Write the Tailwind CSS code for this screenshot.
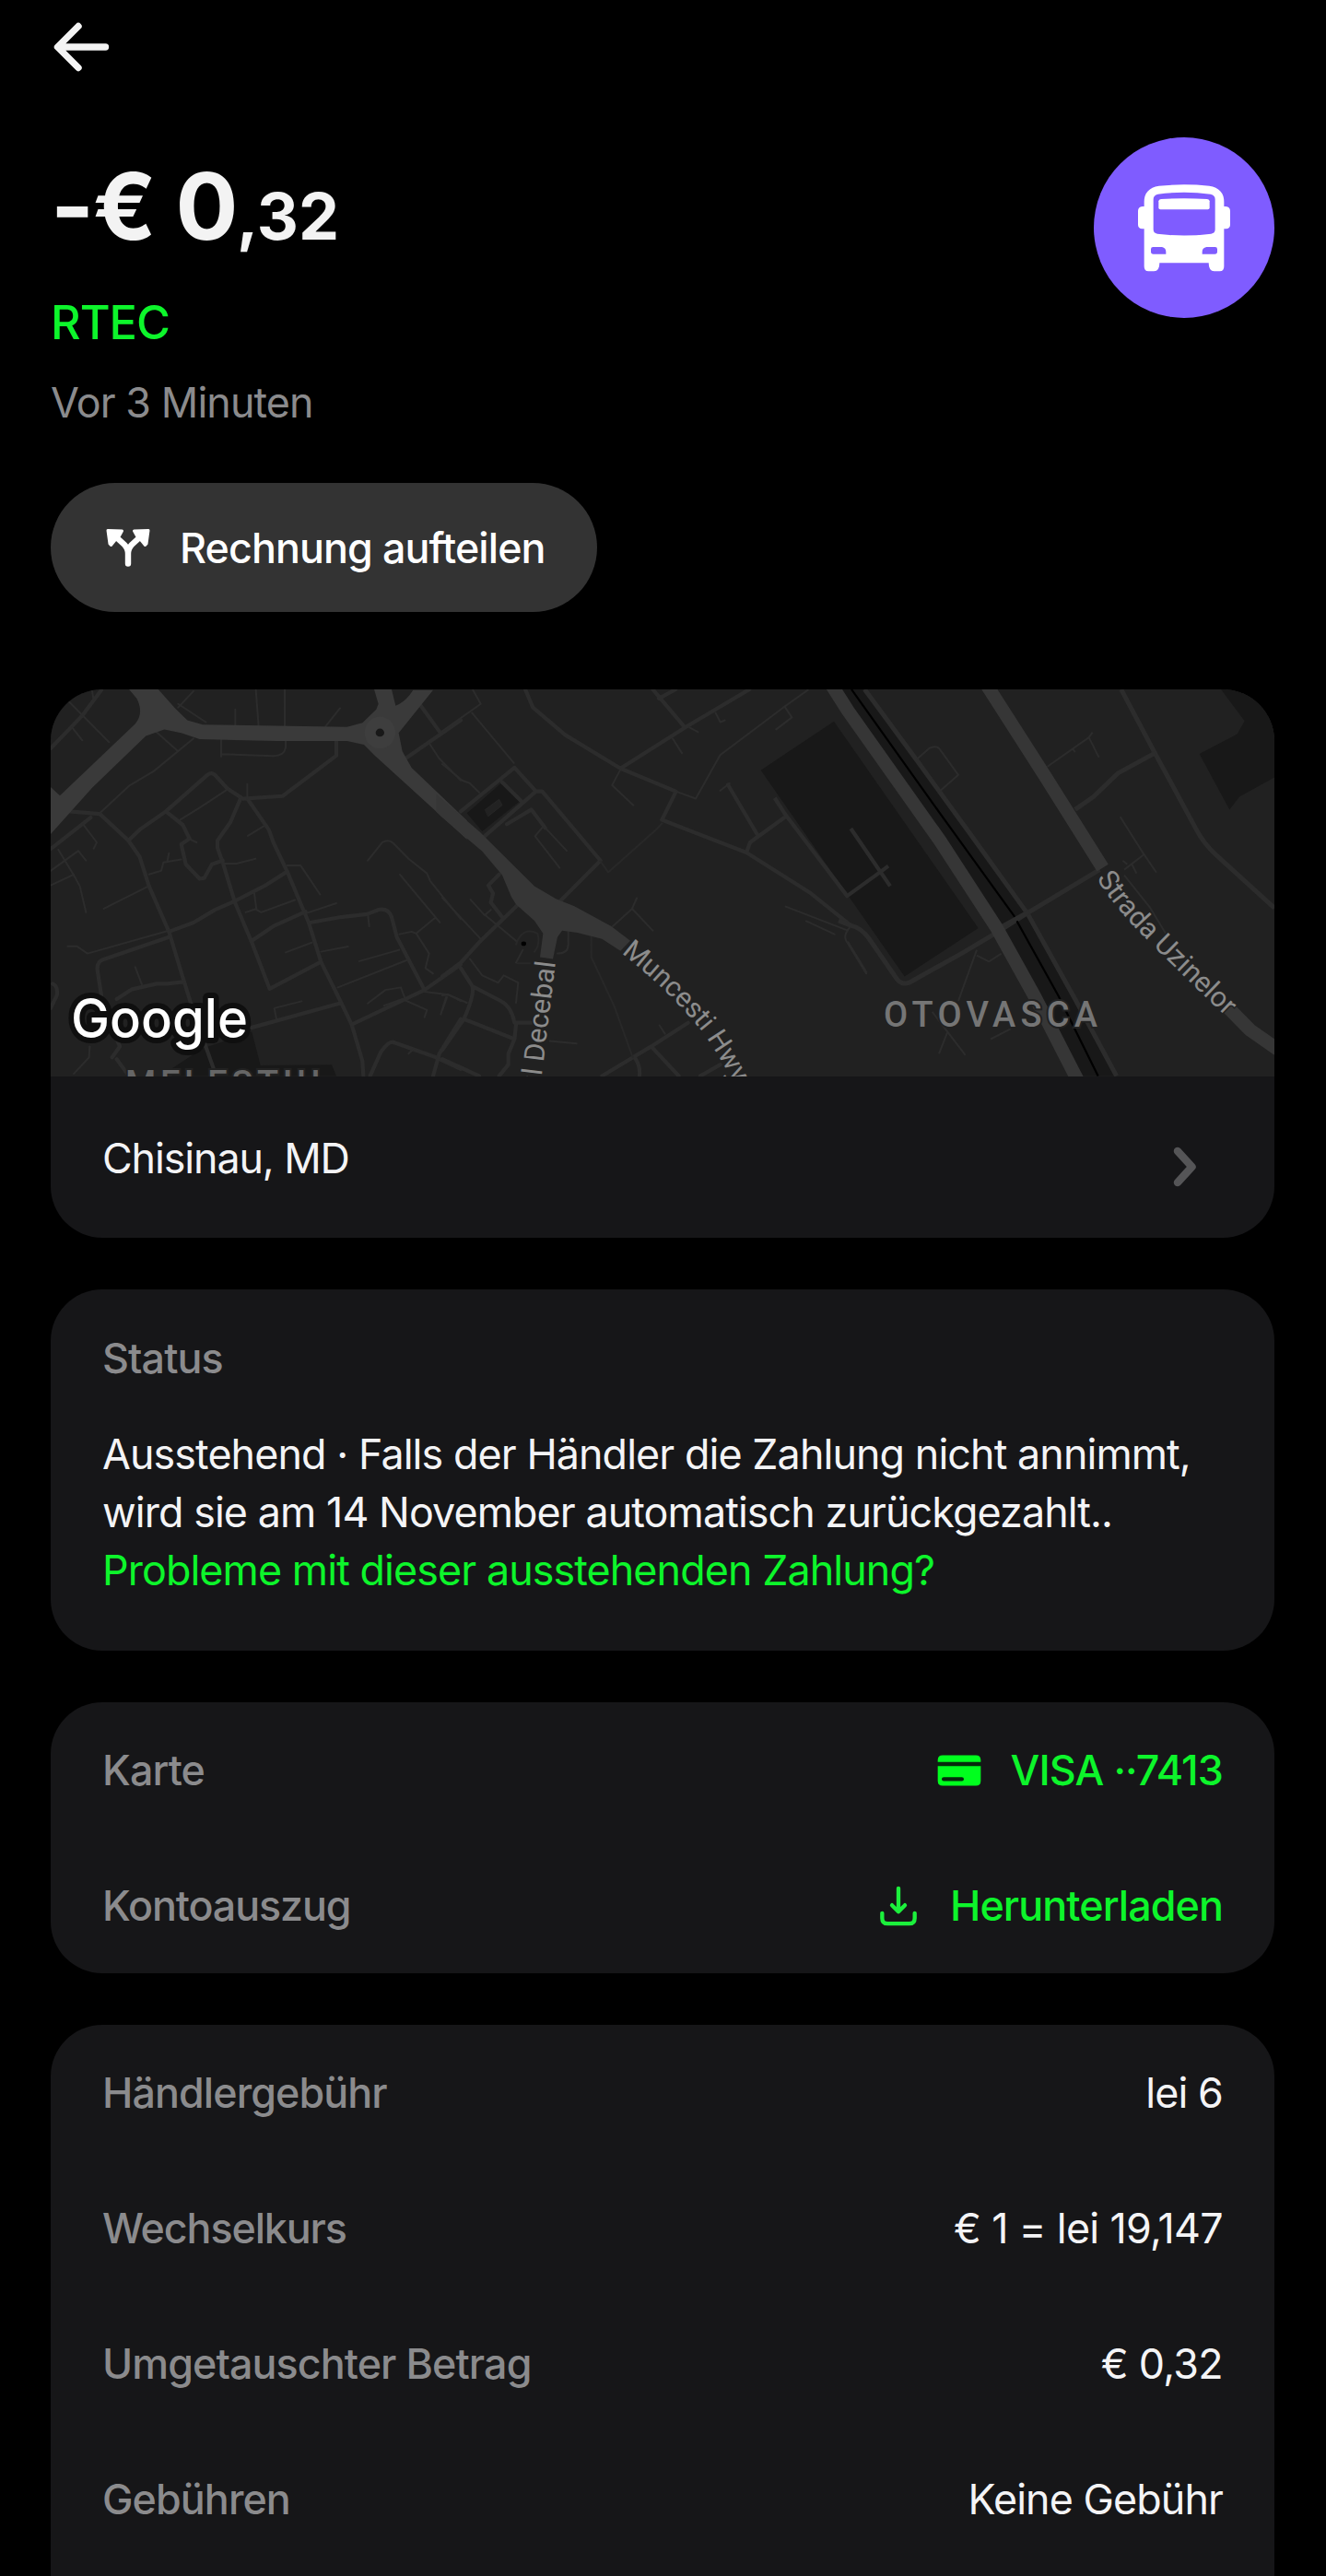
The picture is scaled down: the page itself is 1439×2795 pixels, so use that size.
<!DOCTYPE html>
<html lang="de">
<head>
    <meta charset="utf-8" />
    <title>RTEC</title>
    <meta name="viewport" content="width=device-width, initial-scale=1.0">
    <script src="https://cdn.jsdelivr.net/npm/@tailwindcss/browser@4"></script>
</head>
<body class="bg-black font-[Inter,sans-serif] text-[44.8px] leading-[63px] tracking-[-0.02em] text-[#f4f4f6]">
<div class="w-[1439px] h-[2795px] overflow-hidden px-[55px]">

    <!-- Back -->
    <header class="h-[149px] pt-[23px]">
        <a href="#" aria-label="Zurück" class="block w-16">
            <svg class="w-16 h-14" viewBox="0 0 64 56" fill="none" stroke="#f4f4f4" stroke-width="7.4" stroke-linecap="round" stroke-linejoin="round">
                <path d="M30 5.5L7.5 28L30 50.5M8 28H59.500" />
            </svg>
        </a>
    </header>

    <!-- Amount -->
    <section class="flex justify-between items-start w-[1328px] h-[319px]">
        <div class="pt-[18px]">
            <h1 class="text-[100.8px] leading-[112px] tracking-[-1.5px] font-bold whitespace-nowrap text-[#f3f3f3]">-€ 0<span class="text-[70px] leading-none tracking-normal">,32</span></h1>
            <p class="mt-[36px] text-[50.4px] leading-[70px] tracking-[-1px] font-medium text-[#0df52b]">RTEC</p>
            <p class="mt-[21px] tracking-[-0.9px] text-[#8b8b8d]">Vor 3 Minuten</p>
        </div>
        <div class="w-[196px] h-[196px] rounded-full bg-[#7f5cff]">
            <svg class="w-full h-full" viewBox="0 0 588 588">
                <path fill="#fff" d="M164 210Q164 166 212 158Q294 150 376 158Q424 166 424 210V225H430Q444 227 444 240V284Q444 297 430 298H424V420Q424 436 410 436H392Q374 436 374 409H214Q214 436 196 436H178Q164 436 164 420V298H158Q144 297 144 284V240Q144 227 158 225H164Z" />
                <path fill="#7f5cff" d="M194 202Q194 188 209 185Q294 174 380 185Q395 188 395 202V300Q395 312 382 314Q294 325 207 314Q194 312 194 300ZM193 357H222Q235 360 235 373V380H194Q186 380 186 372V364Q186 357 193 357ZM395 357H367Q353 360 353 373V380H394Q402 380 402 372V364Q402 357 395 357Z" />
                <path fill="#fff" d="M211 208Q211 202 219 201Q294 196 369 201Q377 202 377 208V229Q377 235 371 235H217Q211 235 211 229Z" />
            </svg>
        </div>
    </section>

    <!-- Split bill -->
    <button class="mt-14 flex items-center gap-7 w-[593px] h-[140px] pl-14 rounded-full bg-[#333] text-white font-medium tracking-[-0.9px] whitespace-nowrap">
        <svg class="w-14 h-14" viewBox="0 0 56 56">
            <path fill="none" stroke="#fff" stroke-width="6.400" stroke-linecap="round" d="M28 45.500V35Q28 29 24 25L12 14M28 35Q28 29 32 25L44 14" />
            <path fill="#fff" stroke="#fff" stroke-width="3" stroke-linejoin="round" d="M6 9.500L21.500 10L18.500 15.500L14 20L9.500 25.500L8 24ZM50 9.500L34.500 10L37.500 15.500L42 20L46.500 25.500L48 24Z" />
        </svg>
        <span class="pt-[3px]">Rechnung aufteilen</span>
    </button>

    <!-- Location -->
    <section class="mt-[84px] w-[1328px] rounded-[56px] overflow-hidden bg-[#161618]">
        <svg class="block w-[1328px] h-[420px] bg-[#212121] tracking-normal" viewBox="0 0 1328 420" font-family="Roboto, sans-serif">
            <defs>
                <path id="muncesti" d="M619 286Q671 327 706 370Q726 397 746 436" />
                <path id="uzinelor" d="M1135 205Q1153 235 1187 269Q1233 315 1286 365" />
            </defs>

            <!-- West -->
            <g transform="translate(-15 -8) scale(.33333 .39542)" fill="none" stroke="#2c2c2c" stroke-linejoin="round" stroke-linecap="round">
                <path fill="#181818" stroke="none" d="M440 1060L540 1005L700 960L728 1052L960 1050L975 1081H440Z" />
                <g stroke-width="4.200">
                    <path vector-effect="non-scaling-stroke" d="M45 182L148 92L210 22M45 458L175 372M105 355L205 362L298 435L335 480L365 560L430 685L475 810L510 905L575 1060" />
                    <path vector-effect="non-scaling-stroke" d="M298 435L335 405L420 355L555 255Q570 245 583 258L620 292L670 320L800 313L975 202V158M685 320L755 405L770 440L815 520L885 660L925 768L985 870L1025 940L1060 1040L1063 1081" />
                    <path vector-effect="non-scaling-stroke" d="M662 322L630 385L588 435V455L605 495L645 605L700 715L758 842L925 768M430 685L510 660L580 625L640 603L740 560L815 520M700 710L770 670L875 630" />
                    <path vector-effect="non-scaling-stroke" d="M890 660L990 645L1075 637L1115 624Q1145 620 1155 645L1172 700L1262 845L1380 775M1025 940L1262 845M700 948L985 882" />
                    <path vector-effect="non-scaling-stroke" d="M420 355L475 392L497 430L470 445L485 500L530 540L545 538L570 500L605 490M210 860L197 790Q195 768 215 762L430 700M260 870L310 843L390 828H425L475 823" />
                    <path vector-effect="non-scaling-stroke" d="M1200 210L1380 105M1250 65L1310 135M45 895L65 860Q70 835 52 828M260 1035L300 1081M245 1030L270 1000L250 960" />
                    <path vector-effect="non-scaling-stroke" d="M1085 1081L1120 1015Q1145 985 1160 988L1300 1030L1380 1062M1290 1081L1310 1020L1380 925" />
                </g>
                <g stroke-width="2">
                    <path vector-effect="non-scaling-stroke" d="M100 50L235 165M115 125L148 160M180 25L185 50M205 360L300 285L380 245L510 155M380 130L460 190M460 70L510 25M460 60L550 110" />
                    <path vector-effect="non-scaling-stroke" d="M646 75V122M713 22L722 122M807 20V130M987 72L940 122M600 150V205M600 198L770 203Q805 203 810 180V158M685 280V320M740 395L687 422" />
                    <path vector-effect="non-scaling-stroke" d="M467 378L530 345L620 295M365 528L405 518L412 495L470 487M430 470L425 490M495 430L520 440M605 498H650L712 485M815 503H858L880 530L922 583" />
                    <path vector-effect="non-scaling-stroke" d="M150 390L195 440L185 457M45 518L135 463L160 490M70 460L120 530L140 560L160 632M45 558L120 528M218 622L360 562" />
                    <path vector-effect="non-scaling-stroke" d="M708 580L715 625L730 632L840 598M680 632L715 622M875 635L975 607M810 742L895 715M925 740L1013 726M1078 640L1082 670M1050 766L1180 735M980 838L1205 763" />
                    <path vector-effect="non-scaling-stroke" d="M1077 490L1125 440Q1145 430 1160 442L1210 485L1270 525L1280 545L1380 650M1182 528L1312 660M1180 692L1220 685L1235 690L1277 745L1265 785L1290 800M1235 690L1295 648" />
                    <path vector-effect="non-scaling-stroke" d="M1077 882L1135 845L1185 838L1197 865M1130 888L1190 870L1270 900L1262 920M1262 850L1340 858L1380 875M1332 865L1315 912M862 876L773 895L780 925M1210 1020L1225 1008L1300 1030" />
                    <path vector-effect="non-scaling-stroke" d="M100 725H130L165 745L430 682M320 782L342 830M172 1000L170 1030L120 1075M1275 165L1310 210L1380 270" />
                </g>
                <path fill="#3a3a3a" stroke="none" d="M300 20H395L450 72L490 105L540 117L1010 123L1060 112L1105 75L1112 60L1098 20H1155L1168 65Q1200 55 1225 22H1290L1178 140L1190 190L1220 235L1400 380V432L1100 202L1065 172L1010 162H780L530 157L470 140L415 130L355 148L180 290L45 417V288L75 312L320 115Q350 85 325 45Z" />
                <ellipse cx="1117" cy="139" rx="50" ry="44" fill="#3e3e3e" stroke="none" />
                <ellipse cx="1117" cy="139" rx="14" ry="11" fill="#181818" stroke="none" />
            </g>

            <!-- Center -->
            <g transform="translate(425 -8) scale(.33333 .39542)" fill="none" stroke="#2c2c2c" stroke-linejoin="round" stroke-linecap="round">
                <path fill="#181818" stroke="none" d="M80 360L195 275L255 325L130 410Z" />
                <g stroke-width="4.200">
                    <path vector-effect="non-scaling-stroke" d="M270 20L295 70L400 145L580 237L760 300M685 20L790 125M705 45L760 20M580 237L790 125L1000 20" />
                    <path vector-effect="non-scaling-stroke" d="M760 302L715 378L990 468L1200 580L1330 668M990 468L1002 440L1120 368M1025 418L930 282" />
                    <path vector-effect="non-scaling-stroke" d="M60 355L235 235L305 300L135 425M195 275L255 325M305 300H325L515 490L385 600M210 390L290 350L335 400" />
                    <path vector-effect="non-scaling-stroke" d="M0 808L60 770L125 710L245 612M195 645L158 605L165 580L150 558L185 528M520 1081L680 1000L800 935M680 1000L770 1081M630 1035Q645 1055 642 1081M840 1081L905 1050" />
                    <path vector-effect="non-scaling-stroke" d="M60 785L98 835L190 875Q225 890 235 935H290M98 835Q105 860 70 925L0 1010M70 925L230 978M240 940L235 980L215 1020V1050L185 1081M0 1035L120 1081" />
                </g>
                <g stroke-width="2">
                    <path vector-effect="non-scaling-stroke" d="M760 300L825 320L845 290L905 200L1110 70L1190 22M1115 68L1138 97L1087 130M580 240L553 283L622 338M750 155L780 195M890 85L905 110L920 105M805 125L832 137M905 298L935 278" />
                    <path vector-effect="non-scaling-stroke" d="M0 135L125 60L100 22M97 85L233 222M0 225L65 270L90 278L120 303M335 400L405 463M325 400L302 423L382 510" />
                    <path vector-effect="non-scaling-stroke" stroke="#282828" d="M715 388L700 402L540 522L515 492M485 690V755L560 890L620 1030M240 720Q260 670 310 690Q320 720 300 740M245 772H285" />
                    <path vector-effect="non-scaling-stroke" d="M555 670L618 622L685 682M618 622L633 593M92 597L138 640L158 625M0 592L125 705M140 640L240 710M375 745Q410 745 410 720V685M90 760L130 805L182 825L200 805L247 825L240 880" />
                    <path vector-effect="non-scaling-stroke" d="M0 860L20 858L80 880M0 900L15 865M350 985L437 992M707 942L725 965M1118 616L1320 682M1185 656L1277 692M1325 675Q1305 695 1315 710L1380 800M240 770L262 735" />
                </g>
                <path fill="#222" stroke="#292929" stroke-width="2" d="M140 350L185 322L195 338L150 368Z" />
                <path fill="#363636" stroke="none" d="M-20 307L0 322L120 410L210 485L300 560L370 595L430 615L550 670L612 710L580 738L520 705L440 688L390 682L375 700L360 760L318 755L328 690L300 655L240 610L225 590L195 530L130 465L0 372L-20 356Z" />
                <ellipse cx="265" cy="718" rx="8" ry="6" fill="#000" stroke="none" />
            </g>

            <!-- East -->
            <g transform="translate(865 -8) scale(.33333 .39542)" fill="none" stroke="#2c2c2c" stroke-linejoin="round">
                <path fill="#181818" stroke="none" d="M-283 242L-45 108L425 675L185 808ZM1215 20L1292 107L1268 143L1145 197L1243 350L1275 315L1389 262V20ZM-25 20H50L585 640L875 1081H765L480 640Z" />
                <g stroke-width="4.200">
                    <path vector-effect="non-scaling-stroke" d="M-238 318L-202 365L-2 587L108 520L132 505M10 402L138 560" />
                    <path vector-effect="non-scaling-stroke" stroke-width="5" d="M55 20L225 215L410 430L585 635L740 870L875 1081M890 20L1000 195L1135 405Q1160 445 1200 475L1389 620" />
                    <path vector-effect="non-scaling-stroke" stroke-width="5" d="M-30 655L10 668Q45 675 70 705L160 815Q175 832 200 825L370 745L480 690L585 634L820 515M740 350L800 315L880 250L1000 195" />
                </g>
                <g stroke-width="2">
                    <path vector-effect="non-scaling-stroke" d="M225 212L265 182Q290 172 300 185L360 255L295 303M650 232L785 152L797 138M785 152L818 207M732 182L740 193M887 370L962 470L1005 523M962 475L900 515M925 500L940 525M895 490L910 500M900 530L985 620L1035 690" />
                    <path vector-effect="non-scaling-stroke" d="M0 712L62 798M420 735L360 875M420 750L460 767L500 745M275 905L383 1024M325 960L297 1020M465 980L530 952" />
                </g>
                <path vector-effect="non-scaling-stroke" stroke="#000" stroke-width="2.200" d="M12 20L300 360L540 640L685 860L815 1081" />
                <path vector-effect="non-scaling-stroke" stroke-width="5" d="M490 677L590 630" />
                <path vector-effect="non-scaling-stroke" stroke="#363636" stroke-width="14.500" d="M-55 5L0 78L300 435L485 675L610 865L750 1095M450 5L640 255L830 510M1240 895L1310 955L1400 1008" />
            </g>

            <!-- Street and district names -->
            <g fill="#8c8c8c" stroke="#212121" stroke-width="3" paint-order="stroke" font-size="30.500">
                <text transform="translate(548 296) rotate(-83)" text-anchor="end">Bulevardul Decebal</text>
                <text font-size="30"><textPath href="#muncesti">Muncesti Hwy</textPath></text>
                <text><textPath href="#uzinelor">Strada Uzinelor</textPath></text>
            </g>
            <g fill="#757575" stroke="#212121" stroke-width="4" paint-order="stroke" font-size="38" font-weight="500">
                <text x="904" y="366" textLength="232">OTOVASCA</text>
                <text x="81" y="441" textLength="211" fill="#666">MELESTIU</text>
            </g>
            <text x="22" y="378" textLength="192" lengthAdjust="spacingAndGlyphs" font-family="Inter, sans-serif" font-size="59" font-weight="500" fill="#fff" stroke="#0f0f0f" stroke-width="12" stroke-linejoin="round" paint-order="stroke">Google</text>
        </svg>
        <div class="flex items-center justify-between h-[175px] pl-14 pr-[77px]">
            <span class="pt-[3px] tracking-[-1.1px]">Chisinau, MD</span>
            <svg class="w-10 h-14 mt-5" viewBox="0 0 40 56" fill="none" stroke="#555557" stroke-width="8.500" stroke-linecap="round" stroke-linejoin="round">
                <path d="M12 11L27.500 28L12 45" />
            </svg>
        </div>
    </section>

    <!-- Status -->
    <section class="mt-14 w-[1328px] h-[392px] px-14 rounded-[56px] bg-[#161618] tracking-[-0.9px]">
        <h2 class="flex items-center h-[148px] pt-[2px] font-medium text-[#8b8b8d]">Status</h2>
        <p class="whitespace-nowrap">Ausstehend · Falls der Händler die Zahlung nicht annimmt,<br>wird sie am 14 November automatisch zurückgezahlt..<br><a href="#" class="text-[#0df52b]">Probleme mit dieser ausstehenden Zahlung?</a></p>
    </section>

    <!-- Card and statement -->
    <section class="mt-14 w-[1328px] px-14 rounded-[56px] bg-[#161618] font-medium tracking-[-0.9px] [&_span]:pt-[2px]">
        <div class="flex items-center justify-between h-[147px]">
            <span class="text-[#8b8b8d]">Karte</span>
            <a href="#" class="flex items-center gap-7 text-[#0df52b]">
                <svg class="w-14 h-14" viewBox="-14 -34.500 168 168">
                    <rect y="18" width="140" height="22" fill="#062a0c" />
                    <path fill="#00ff1e" d="M0 22V16Q0 0 16 0H124Q140 0 140 16V22ZM0 35H140V83Q140 99 124 99H16Q0 99 0 83Z" />
                    <rect x="13" y="71" width="72" height="13" rx="6.500" fill="#062a0c" />
                </svg>
                <span>VISA ··7413</span>
            </a>
        </div>
        <div class="flex items-center justify-between h-[147px]">
            <span class="tracking-[-1.1px] text-[#8b8b8d]">Kontoauszug</span>
            <a href="#" class="flex items-center gap-7 text-[#0df52b]">
                <svg class="w-14 h-14" viewBox="-25 -20.500 168 168" fill="none" stroke="#1cf03c" stroke-width="13" stroke-linecap="round" stroke-linejoin="round">
                    <path d="M59 6V80M38 61L59 82L80 61M6 87V103Q6 121 24 121H94Q112 121 112 103V87" />
                </svg>
                <span>Herunterladen</span>
            </a>
        </div>
    </section>

    <!-- Details -->
    <section class="mt-14 w-[1328px] h-[700px] px-14 rounded-t-[56px] bg-[#161618] tracking-[-0.9px] [&_span]:pt-[2px]">
        <div class="flex items-center justify-between h-[147px]">
            <span class="font-medium text-[#8b8b8d]">Händlergebühr</span>
            <span>lei 6</span>
        </div>
        <div class="flex items-center justify-between h-[147px]">
            <span class="tracking-[-1.1px] font-medium text-[#8b8b8d]">Wechselkurs</span>
            <span class="tracking-[-0.65px]">€ 1 = lei 19,147</span>
        </div>
        <div class="flex items-center justify-between h-[147px]">
            <span class="font-medium text-[#8b8b8d]">Umgetauschter Betrag</span>
            <span class="tracking-[-0.65px]">€ 0,32</span>
        </div>
        <div class="flex items-center justify-between h-[147px]">
            <span class="font-medium text-[#8b8b8d]">Gebühren</span>
            <span>Keine Gebühr</span>
        </div>
    </section>
</div>
</body>
</html>
